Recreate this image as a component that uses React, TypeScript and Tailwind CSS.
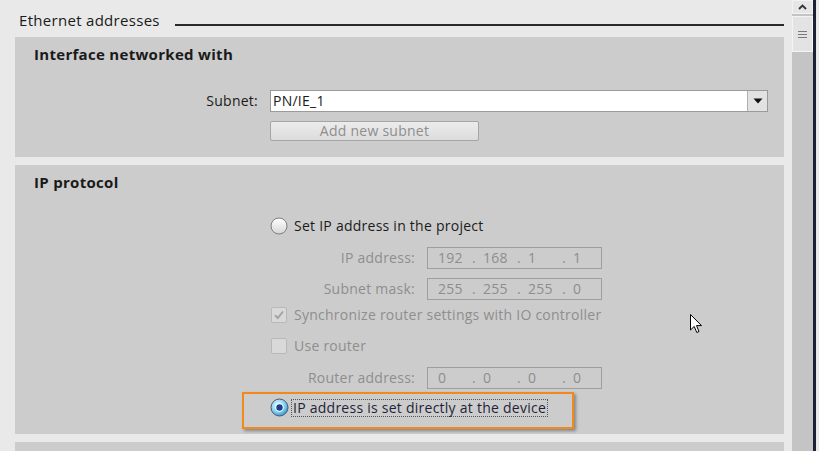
import React from 'react';

function RadioOff() {
  return (
    <svg width="18" height="18" viewBox="0 0 18 18" className="shrink-0">
      <defs>
        <linearGradient id="roff" x1="0" y1="0" x2="0" y2="1">
          <stop offset="0" stopColor="#ffffff" />
          <stop offset="1" stopColor="#d6d6d6" />
        </linearGradient>
      </defs>
      <circle cx="9" cy="9" r="8" fill="url(#roff)" stroke="#7d7d7d" strokeWidth="1" />
    </svg>
  );
}

function RadioOn() {
  return (
    <svg width="19" height="19" viewBox="0 0 19 19" className="shrink-0">
      <defs>
        <radialGradient id="ron" cx="0.4" cy="0.35" r="0.7">
          <stop offset="0" stopColor="#e8f8ff" />
          <stop offset="0.6" stopColor="#7fd0f2" />
          <stop offset="1" stopColor="#2f8fd0" />
        </radialGradient>
      </defs>
      <circle cx="9.5" cy="9.5" r="8.5" fill="url(#ron)" stroke="#4b5866" strokeWidth="1" />
      <circle cx="9.5" cy="9.5" r="4.2" fill="#ffffff" />
      <circle cx="9.5" cy="9.5" r="3.2" fill="#173f8c" />
    </svg>
  );
}

function CheckBox({ checked }: { checked?: boolean }) {
  return (
    <div className="flex h-[16px] w-[16px] shrink-0 items-center justify-center rounded-[2px] border border-[#b9b9b9] bg-[#d9d9d9]">
      {checked && (
        <svg width="12" height="12" viewBox="0 0 12 12">
          <path d="M2 6.2 L4.8 9 L10 2.5" fill="none" stroke="#a3a3a3" strokeWidth="2" />
        </svg>
      )}
    </div>
  );
}

function IpBox({ parts }: { parts: string[] }) {
  return (
    <div className="flex h-[22px] w-[175px] items-center border border-[#9e9e9e] pl-[10px] text-[#8e8e8e]">
      {parts.map((p, i) => (
        <div key={i} className="flex w-[45px] shrink-0">
          <span className="w-[34px]">{p}</span>
          {i < 3 && <span>.</span>}
        </div>
      ))}
    </div>
  );
}

function IpRow({ label, parts, className }: { label: string; parts: string[]; className: string }) {
  return (
    <div className={`flex h-[22px] items-center ${className}`}>
      <div className="w-[412px] pr-[12px] text-right text-[#8e8e8e]">{label}</div>
      <IpBox parts={parts} />
    </div>
  );
}

export default function App() {
  return (
    <div className="relative flex h-[451px] w-[819px] overflow-hidden bg-[#e9e9e9] font-['Open_Sans',sans-serif] text-[14px] leading-[18px] tracking-[0.25px] text-[#1b1b1b]">
      {/* content */}
      <div className="flex flex-1 flex-col pl-[15px] pr-[8px]">
        {/* section header */}
        <div className="flex h-[37px] items-start pt-[10px]">
          <span className="pl-[4px] text-[15px] leading-[20px] tracking-[0.3px] text-[#1a1a1a]">Ethernet addresses</span>
          <div className="ml-[15px] mt-[14px] h-[2px] flex-1 bg-[#2a2a2a]" />
        </div>

        {/* Interface networked with */}
        <div className="flex h-[120px] flex-col bg-[#cccccc] pt-[8px]">
          <div className="h-[18px] pl-[19px] text-[15px] font-bold leading-[18px] tracking-[0.3px] text-[#1a1a1a]">
            Interface networked with
          </div>
          <div className="mt-[27px] flex h-[22px] items-center">
            <div className="w-[243px] text-right">Subnet:</div>
            <div className="ml-[12px] flex h-[22px] w-[498px] items-stretch border border-[#9a9a9a] bg-white">
              <div className="flex-1 pl-[2px] leading-[20px]">PN/IE_1</div>
              <div className="flex w-[20px] items-center justify-center border-l border-[#b0b0b0] bg-[#e2e2e2]">
                <svg width="10" height="6" viewBox="0 0 10 6">
                  <path d="M0.5 0.5 H9.5 L5 5.5 Z" fill="#111111" />
                </svg>
              </div>
            </div>
          </div>
          <div className="mt-[9px] flex">
            <div className="ml-[255px] flex h-[20px] w-[209px] items-center justify-center rounded-[2px] border border-[#a5a5a5] bg-gradient-to-b from-[#ececec] to-[#dcdcdc] text-[#8e8e8e]">
              Add new subnet
            </div>
          </div>
        </div>

        <div className="h-[8px]" />

        {/* IP protocol */}
        <div className="flex h-[269px] flex-col bg-[#cccccc] pt-[8px]">
          <div className="h-[18px] pl-[19px] text-[15px] font-bold leading-[18px] tracking-[0.3px] text-[#1a1a1a]">IP protocol</div>

          <div className="ml-[255px] mt-[24px] flex h-[22px] items-center gap-[6px]">
            <RadioOff />
            <span>Set IP address in the project</span>
          </div>

          <IpRow label="IP address:" parts={['192', '168', '1', '1']} className="mt-[10px]" />
          <IpRow label="Subnet mask:" parts={['255', '255', '255', '0']} className="mt-[9px]" />

          <div className="ml-[256px] mt-[4px] flex h-[22px] items-center gap-[7px] text-[#8e8e8e]">
            <CheckBox checked />
            <span>Synchronize router settings with IO controller</span>
          </div>
          <div className="ml-[256px] mt-[9px] flex h-[22px] items-center gap-[7px] text-[#8e8e8e]">
            <CheckBox />
            <span>Use router</span>
          </div>

          <IpRow label="Router address:" parts={['0', '0', '0', '0']} className="mt-[10px]" />

          <div className="ml-[227px] mt-[3px] flex h-[37px] w-[332px] items-start border-2 border-[#f28a1a] pl-[26px] pt-[4px] shadow-[2px_2px_3px_rgba(0,0,0,0.35)]">
            <div className="flex items-center gap-[2px]">
              <RadioOn />
              <span className="border border-dotted border-[#555555] px-[1px] leading-[16px] text-[#1f1f3a]">
                IP address is set directly at the device
              </span>
            </div>
          </div>
        </div>

        <div className="h-[8px]" />
        <div className="flex-1 bg-[#cccccc]" />
      </div>

      {/* scrollbar */}
      <div className="flex w-[21px] flex-col bg-[#c4c4c4]">
        <div className="flex h-[14px] items-center justify-center border border-[#f2f2f2] bg-[#e6e6e6]">
          <svg width="9" height="6" viewBox="0 0 9 6">
            <path d="M1 5 L4.5 1.5 L8 5" fill="none" stroke="#333333" strokeWidth="1.8" />
          </svg>
        </div>
        <div className="mt-[2px] flex h-[36px] items-center justify-center border border-[#f4f4f4] bg-[#e3e3e3]">
          <svg width="9" height="9" viewBox="0 0 9 9">
            <path d="M0 1.5 H9 M0 4.5 H9 M0 7.5 H9" stroke="#7a7a7a" strokeWidth="1" />
          </svg>
        </div>
      </div>
      <div className="w-[3px] bg-[#1d2133]" />
      <div className="w-[3px] bg-[#e9e9e9]" />

      {/* mouse cursor */}
      <svg className="absolute left-[690px] top-[314px]" width="13" height="20" viewBox="0 0 13 20">
        <path d="M0.5 0.5 V16 L4.2 12.4 L6.8 18.5 L9 17.5 L6.5 11.6 H11.5 Z" fill="#ffffff" stroke="#000000" strokeWidth="1" />
      </svg>
    </div>
  );
}
